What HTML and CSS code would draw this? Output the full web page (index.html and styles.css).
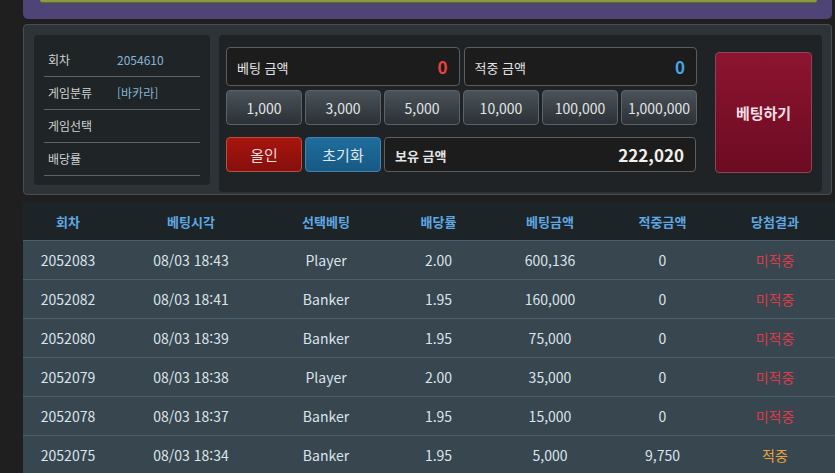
FILE: index.html
```html
<!DOCTYPE html>
<html lang="ko">
<head>
<meta charset="utf-8">
<title>베팅</title>
<link rel="stylesheet" href="styles.css">
</head>
<body>
<div class="page">
  <div class="top-panel"><div class="top-bar"></div></div>

  <div class="bet-panel">
    <div class="info">
      <div class="info-row"><span class="lbl">회차</span><span class="val">2054610</span></div>
      <div class="info-row"><span class="lbl">게임분류</span><span class="val">[바카라]</span></div>
      <div class="info-row"><span class="lbl">게임선택</span><span class="val"></span></div>
      <div class="info-row"><span class="lbl">배당률</span><span class="val"></span></div>
    </div>

    <div class="controls">
      <div class="ctl-grid">
        <div class="amount-row">
          <div class="box"><span class="box-lbl">베팅 금액</span><b class="num red">0</b></div>
          <div class="box"><span class="box-lbl">적중 금액</span><b class="num blue">0</b></div>
        </div>
        <div class="chips">
          <button class="chip">1,000</button>
          <button class="chip">3,000</button>
          <button class="chip">5,000</button>
          <button class="chip">10,000</button>
          <button class="chip">100,000</button>
          <button class="chip">1,000,000</button>
        </div>
        <div class="actions">
          <button class="act allin">올인</button>
          <button class="act reset">초기화</button>
          <div class="box hold"><span class="box-lbl strong">보유 금액</span><b class="balance">222,020</b></div>
        </div>
      </div>
      <button class="bet-btn">베팅하기</button>
    </div>
  </div>

  <table class="history">
    <colgroup>
      <col class="c1"><col class="c2"><col class="c3"><col class="c4"><col class="c5"><col class="c6"><col class="c7">
    </colgroup>
    <thead>
      <tr><th>회차</th><th>베팅시각</th><th>선택베팅</th><th>배당률</th><th>베팅금액</th><th>적중금액</th><th class="last">당첨결과</th></tr>
    </thead>
    <tbody>
      <tr><td>2052083</td><td>08/03 18:43</td><td>Player</td><td>2.00</td><td>600,136</td><td>0</td><td class="last lose">미적중</td></tr>
      <tr><td>2052082</td><td>08/03 18:41</td><td>Banker</td><td>1.95</td><td>160,000</td><td>0</td><td class="last lose">미적중</td></tr>
      <tr><td>2052080</td><td>08/03 18:39</td><td>Banker</td><td>1.95</td><td>75,000</td><td>0</td><td class="last lose">미적중</td></tr>
      <tr><td>2052079</td><td>08/03 18:38</td><td>Player</td><td>2.00</td><td>35,000</td><td>0</td><td class="last lose">미적중</td></tr>
      <tr><td>2052078</td><td>08/03 18:37</td><td>Banker</td><td>1.95</td><td>15,000</td><td>0</td><td class="last lose">미적중</td></tr>
      <tr><td>2052075</td><td>08/03 18:34</td><td>Banker</td><td>1.95</td><td>5,000</td><td>9,750</td><td class="last win">적중</td></tr>
    </tbody>
  </table>
</div>
</body>
</html>
```

FILE: styles.css
```css
html, body {
  margin: 0;
  background: #1f1f1f;
  font-family: "Noto Sans CJK KR", "Noto Sans", sans-serif;
  overflow: hidden;
}

.page {
  padding-left: 23px;
}

/* top purple panel */
.top-panel {
  width: 809px;
  height: 19px;
  box-sizing: border-box;
  padding: 0 15px 0 17px;
  background: #4e4476;
  border-radius: 0 0 5px 5px;
}
.top-bar {
  height: 2px;
  background: #8b9c3d;
  border-bottom: 1px solid #5d6a2b;
  border-radius: 0 0 3px 3px;
}

/* betting panel */
.bet-panel {
  margin-top: 5px;
  width: 809px;
  height: 171px;
  box-sizing: border-box;
  display: flex;
  align-items: flex-start;
  gap: 9px;
  padding: 10px 9px 0 10px;
  background: #2d3336;
  border: 1px solid #474d50;
  border-radius: 4px;
}

.info {
  width: 176px;
  height: 150px;
  box-sizing: border-box;
  padding: 9px 10px 0;
  background: #1f2426;
  border-radius: 4px;
}
.info-row {
  height: 33px;
  box-sizing: border-box;
  display: flex;
  align-items: center;
  border-bottom: 1px solid #5e6264;
  font-size: 12px;
  line-height: 16px;
}
.lbl {
  width: 73px;
  box-sizing: border-box;
  padding-left: 4px;
  color: #cfd2d3;
}
.val {
  color: #86b4d6;
}

.controls {
  width: 603px;
  height: 157px;
  box-sizing: border-box;
  display: flex;
  align-items: flex-start;
  padding: 12px 0 0 7px;
  background: #1f2325;
  border-radius: 4px;
}
.ctl-grid {
  width: 471px;
  display: flex;
  flex-direction: column;
}
.amount-row {
  display: grid;
  grid-template-columns: 1fr 1fr;
  gap: 4px;
}
.box {
  height: 39px;
  box-sizing: border-box;
  display: flex;
  align-items: center;
  justify-content: space-between;
  padding: 0 11px 0 10px;
  background: #1c1c1d;
  border: 1px solid #5c5d5e;
  border-radius: 4px;
}
.box-lbl {
  font-size: 13px;
  line-height: 16px;
  color: #e4e4e4;
  padding-top: 2px;
}
.box-lbl.strong {
  font-weight: 700;
}
.num {
  font-size: 17px;
  line-height: 20px;
  font-weight: 700;
}
.red { color: #e8423f; }
.blue { color: #45a5e2; }

.chips {
  margin-top: 4px;
  display: grid;
  grid-template-columns: repeat(6, 1fr);
  gap: 3px;
}
.chip {
  height: 35px;
  padding: 0;
  font-family: inherit;
  font-size: 14px;
  color: #e2e4e6;
  background: linear-gradient(#4a5359, #2b3136);
  border: 1px solid #5b6369;
  border-radius: 4px;
}

.actions {
  margin-top: 12px;
  display: grid;
  grid-template-columns: 76px 76px 1fr;
  gap: 3px;
}
.act {
  height: 35px;
  padding: 0;
  font-family: inherit;
  font-size: 15px;
  color: #ecdcdc;
  border-radius: 4px;
}
.allin {
  background: linear-gradient(#a8140f, #85100d);
  border: 1px solid #b9503f;
}
.reset {
  color: #dfe8f0;
  background: linear-gradient(#1f6d9e, #175a84);
  border: 1px solid #3f84b2;
}
.hold {
  height: 35px;
  margin-right: 1px;
}
.balance {
  font-size: 17px;
  line-height: 20px;
  font-weight: 700;
  color: #f0efe9;
}

.bet-btn {
  margin: 5px 0 0 18px;
  width: 97px;
  height: 121px;
  padding: 0;
  font-family: inherit;
  font-size: 15px;
  font-weight: 700;
  color: #f4dfe4;
  background: linear-gradient(#8d1430, #6c0b22);
  border: 1px solid #8c4654;
  border-radius: 4px;
}

/* history table */
.history {
  margin-top: 7px;
  width: 812px;
  border-collapse: collapse;
  table-layout: fixed;
}
.c1 { width: 90px; }
.c2 { width: 156px; }
.c3 { width: 114px; }
.c4 { width: 111px; }
.c5 { width: 112px; }
.c6 { width: 113px; }
.c7 { width: 116px; }

.history th {
  height: 38px;
  padding: 0;
  background: #1d2428;
  color: #5ea8e2;
  font-size: 13px;
  font-weight: 700;
  text-align: center;
}
.history td {
  height: 38px;
  padding: 0;
  background: #37464f;
  border-top: 1px solid #4a5e6c;
  color: #dce4ea;
  font-size: 14px;
  text-align: center;
}
.history .last {
  padding-right: 4px;
}
.history td.lose {
  color: #dc3c4a;
}
.history td.win {
  color: #e8a53a;
}
```
